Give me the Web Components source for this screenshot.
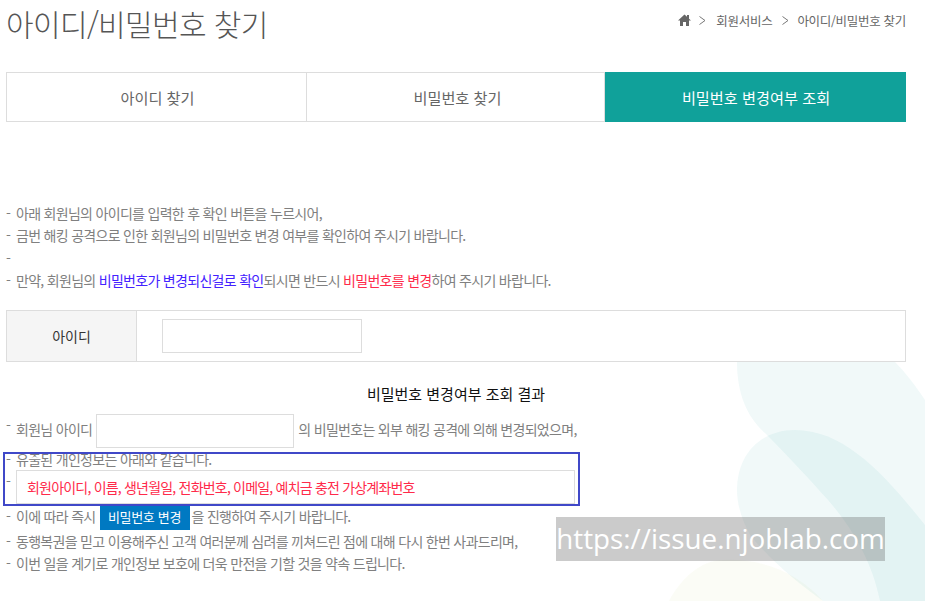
<!DOCTYPE html>
<html lang="ko">
<head>
<meta charset="utf-8">
<title>아이디/비밀번호 찾기</title>
<style>
    html, body {
        margin: 0;
        height: 100%;
        overflow: hidden;
        background: #fff;
    }
    body {
        font-family: "Noto Sans CJK KR", "Noto Sans", sans-serif;
        color: #777;
    }
</style>
</head>
<body>
<bg-blobs></bg-blobs>
<find-page>
    <page-header title="아이디/비밀번호 찾기">
        <bread-crumb></bread-crumb>
    </page-header>
    <tab-bar></tab-bar>
    <notice-list>
        <notice-line>아래 회원님의 아이디를 입력한 후 확인 버튼을 누르시어,</notice-line>
        <notice-line>금번 해킹 공격으로 인한 회원님의 비밀번호 변경 여부를 확인하여 주시기 바랍니다.</notice-line>
        <notice-line></notice-line>
        <notice-line>만약, 회원님의 <span style="color:#4422ff">비밀번호가 변경되신걸로 확인</span>되시면 반드시 <span style="color:#ff2a4a">비밀번호를 변경</span>하여 주시기 바랍니다.</notice-line>
    </notice-list>
    <id-form></id-form>
    <check-result></check-result>
</find-page>
<water-mark>https://issue.njoblab.com</water-mark>

<script>
const defineEl = (name, html, cls) => {
    const template = document.createElement('template');
    template.innerHTML = html;
    customElements.define(name, class extends HTMLElement {
        constructor() {
            super();
            this.attachShadow({mode: 'open'});
            this.shadowRoot.appendChild(template.content.cloneNode(true));
            if (cls) cls(this);
        }
    });
};

defineEl('find-page', `
<style>
    :host {
        display: block;
        position: relative;
        width: 900px;
        margin-left: 6px;
    }
</style>
<slot></slot>
`);

defineEl('bg-blobs', `
<style>
    :host {
        display: block;
        position: absolute;
        left: 0;
        top: 0;
    }
    svg { display: block; }
</style>
<svg width="925" height="601" viewBox="0 0 925 601">
    <path d="M737 362C737 395 748 418 765 433C790 458 810 480 828 500C850 525 872 560 880 601H925V400C915 385 905 372 895 362Z" fill="#10a19a" fill-opacity=".06"/>
    <path d="M737 490C737 455 760 430 795 430C845 430 885 475 925 525V601H823C800 585 770 560 750 535C742 520 737 505 737 490Z" fill="#10a19a" fill-opacity=".06"/>
    <path d="M669 601C680 580 700 560 723 560C765 558 800 575 823 601Z" fill="#bec864" fill-opacity=".06"/>
</svg>
`);

defineEl('page-header', `
<style>
    :host {
        display: flex;
        justify-content: space-between;
        align-items: flex-start;
        height: 72px;
    }
    h1 {
        margin: 0;
        font-size: 30px;
        line-height: 46px;
        font-weight: 300;
        color: #555;
        letter-spacing: -0.64px;
    }
</style>
<h1></h1>
<slot></slot>
`, el => {
    el.shadowRoot.querySelector('h1').textContent = el.getAttribute('title');
});

defineEl('bread-crumb', `
<style>
    :host {
        display: flex;
        align-items: center;
        gap: 8px;
        height: 40px;
        font-size: 12.500px;
        color: #666;
        letter-spacing: -0.3px;
    }
    svg { display: block; }
    .sep {
        width: 9px;
        height: 9px;
    }
    .sep.next {
        margin: 0 -2px 0 2px;
    }
</style>
<svg width="13" height="12" viewBox="0 0 13 12"><path d="M6.500 .5L9 2.800V1H11V4.700L13 6.500H11V12H8V8H5V12H2V6.500H0Z" fill="#666"/></svg>
<svg class="sep" viewBox="0 0 9 9"><path d="M.5 .5L6 4.500L.5 8.500" fill="none" stroke="#777"/></svg>
<span>회원서비스</span>
<svg class="sep next" viewBox="0 0 9 9"><path d="M.5 .5L6 4.500L.5 8.500" fill="none" stroke="#777"/></svg>
<span>아이디/비밀번호 찾기</span>
`);

defineEl('tab-bar', `
<style>
    :host {
        display: grid;
        grid-template-columns: 301px 298px 301px;
        height: 50px;
        box-sizing: border-box;
        font-size: 15.200px;
    }
    div {
        display: flex;
        align-items: center;
        justify-content: center;
        border: 1px solid #ddd;
        border-left: 0;
        color: #666;
        padding-left: 2px;
    }
    div:first-of-type { border-left: 1px solid #ddd; }
    div:nth-of-type(2) { padding-left: 4px; }
    div.on {
        background: #10a19a;
        border-color: #10a19a;
        color: #fff;
    }
</style>
<div>아이디 찾기</div>
<div>비밀번호 찾기</div>
<div class="on">비밀번호 변경여부 조회</div>
`);

defineEl('notice-list', `
<style>
    :host {
        display: block;
        padding-top: 80px;
        margin-bottom: 19px;
    }
</style>
<slot></slot>
`);

defineEl('notice-line', `
<style>
    :host {
        display: flex;
        height: 22.300px;
        line-height: 22px;
        font-size: 14px;
        color: #808080;
        letter-spacing: -0.7px;
    }
    span { width: 10px; }
</style>
<span>-</span><div><slot></slot></div>
`);

defineEl('id-form', `
<style>
    :host {
        display: grid;
        grid-template-columns: 130px 1fr;
        height: 52px;
        box-sizing: border-box;
        border: 1px solid #ddd;
        margin-bottom: 20px;
    }
    .label {
        display: flex;
        align-items: center;
        justify-content: center;
        background: #f5f5f5;
        border-right: 1px solid #ddd;
        font-size: 14px;
        color: #333;
    }
    .field {
        display: flex;
        align-items: center;
        padding-left: 25px;
    }
    input {
        width: 200px;
        height: 34px;
        box-sizing: border-box;
        border: 1px solid #ddd;
        background: #fff;
    }
</style>
<div class="label">아이디</div>
<div class="field"><input type="text"></div>
`);

defineEl('check-result', `
<style>
    :host {
        display: block;
        position: relative;
        font-size: 14px;
        color: #808080;
        letter-spacing: -0.7px;
    }
    h2 {
        margin: 0 0 8px;
        font-size: 15px;
        font-weight: 400;
        line-height: 24px;
        color: #111;
        text-align: center;
        letter-spacing: 0;
    }
    .row {
        display: flex;
        align-items: center;
        line-height: 22px;
    }
    .dash { width: 10px; }
    .dash.up { align-self: flex-start; }
    .raised { margin-bottom: 4px; }
    input {
        width: 198px;
        height: 34px;
        box-sizing: border-box;
        border: 1px solid #ddd;
        background: #fff;
        margin: 0 4px;
    }
    .leak {
        width: 559px;
        height: 34px;
        box-sizing: border-box;
        border: 1px solid #ddd;
        background: #fff;
        color: #ff2a4a;
        padding-left: 10px;
        line-height: 32px;
        letter-spacing: -0.8px;
    }
    .btn {
        display: block;
        width: 90px;
        height: 25px;
        background: #0079c2;
        color: #fff;
        font-size: 13px;
        line-height: 24px;
        text-align: center;
        margin: 0 2px 0 4px;
        letter-spacing: -0.3px;
    }
    .hilite {
        position: absolute;
        left: -3px;
        top: 70px;
        box-sizing: border-box;
        width: 577px;
        height: 54px;
        border: 2px solid #4048c8;
    }
</style>
<h2>비밀번호 변경여부 조회 결과</h2>
<div class="row" style="height:34px"><span class="dash up">-</span><span class="raised">회원님 아이디</span><input type="text"><span class="raised">의 비밀번호는 외부 해킹 공격에 의해 변경되었으며,</span></div>
<div class="row" style="height:22px"><span class="dash">-</span><span>유출된 개인정보는 아래와 같습니다.</span></div>
<div class="row" style="height:35px;align-items:flex-start"><span class="dash up">-</span><div class="leak">회원아이디, 이름, 생년월일, 전화번호, 이메일, 예치금 충전 가상계좌번호</div></div>
<div class="row" style="height:25px"><span class="dash raised">-</span><span class="raised">이에 따라 즉시</span><span class="btn">비밀번호 변경</span><span class="raised">을 진행하여 주시기 바랍니다.</span></div>
<div class="row" style="height:22px"><span class="dash">-</span><span>동행복권을 믿고 이용해주신 고객 여러분께 심려를 끼쳐드린 점에 대해 다시 한번 사과드리며,</span></div>
<div class="row" style="height:22px"><span class="dash">-</span><span>이번 일을 계기로 개인정보 보호에 더욱 만전을 기할 것을 약속 드립니다.</span></div>
<div class="hilite"></div>
`);

defineEl('water-mark', `
<style>
    :host {
        display: block;
        position: absolute;
        left: 556px;
        top: 517px;
        width: 329px;
        height: 44px;
        background: rgba(103, 103, 103, 0.34);
        color: #fff;
        font-family: "Open Sans", sans-serif;
        font-size: 27.800px;
        line-height: 42px;
        text-align: center;
        white-space: nowrap;
    }
</style>
<slot></slot>
`);
</script>
</body>
</html>
